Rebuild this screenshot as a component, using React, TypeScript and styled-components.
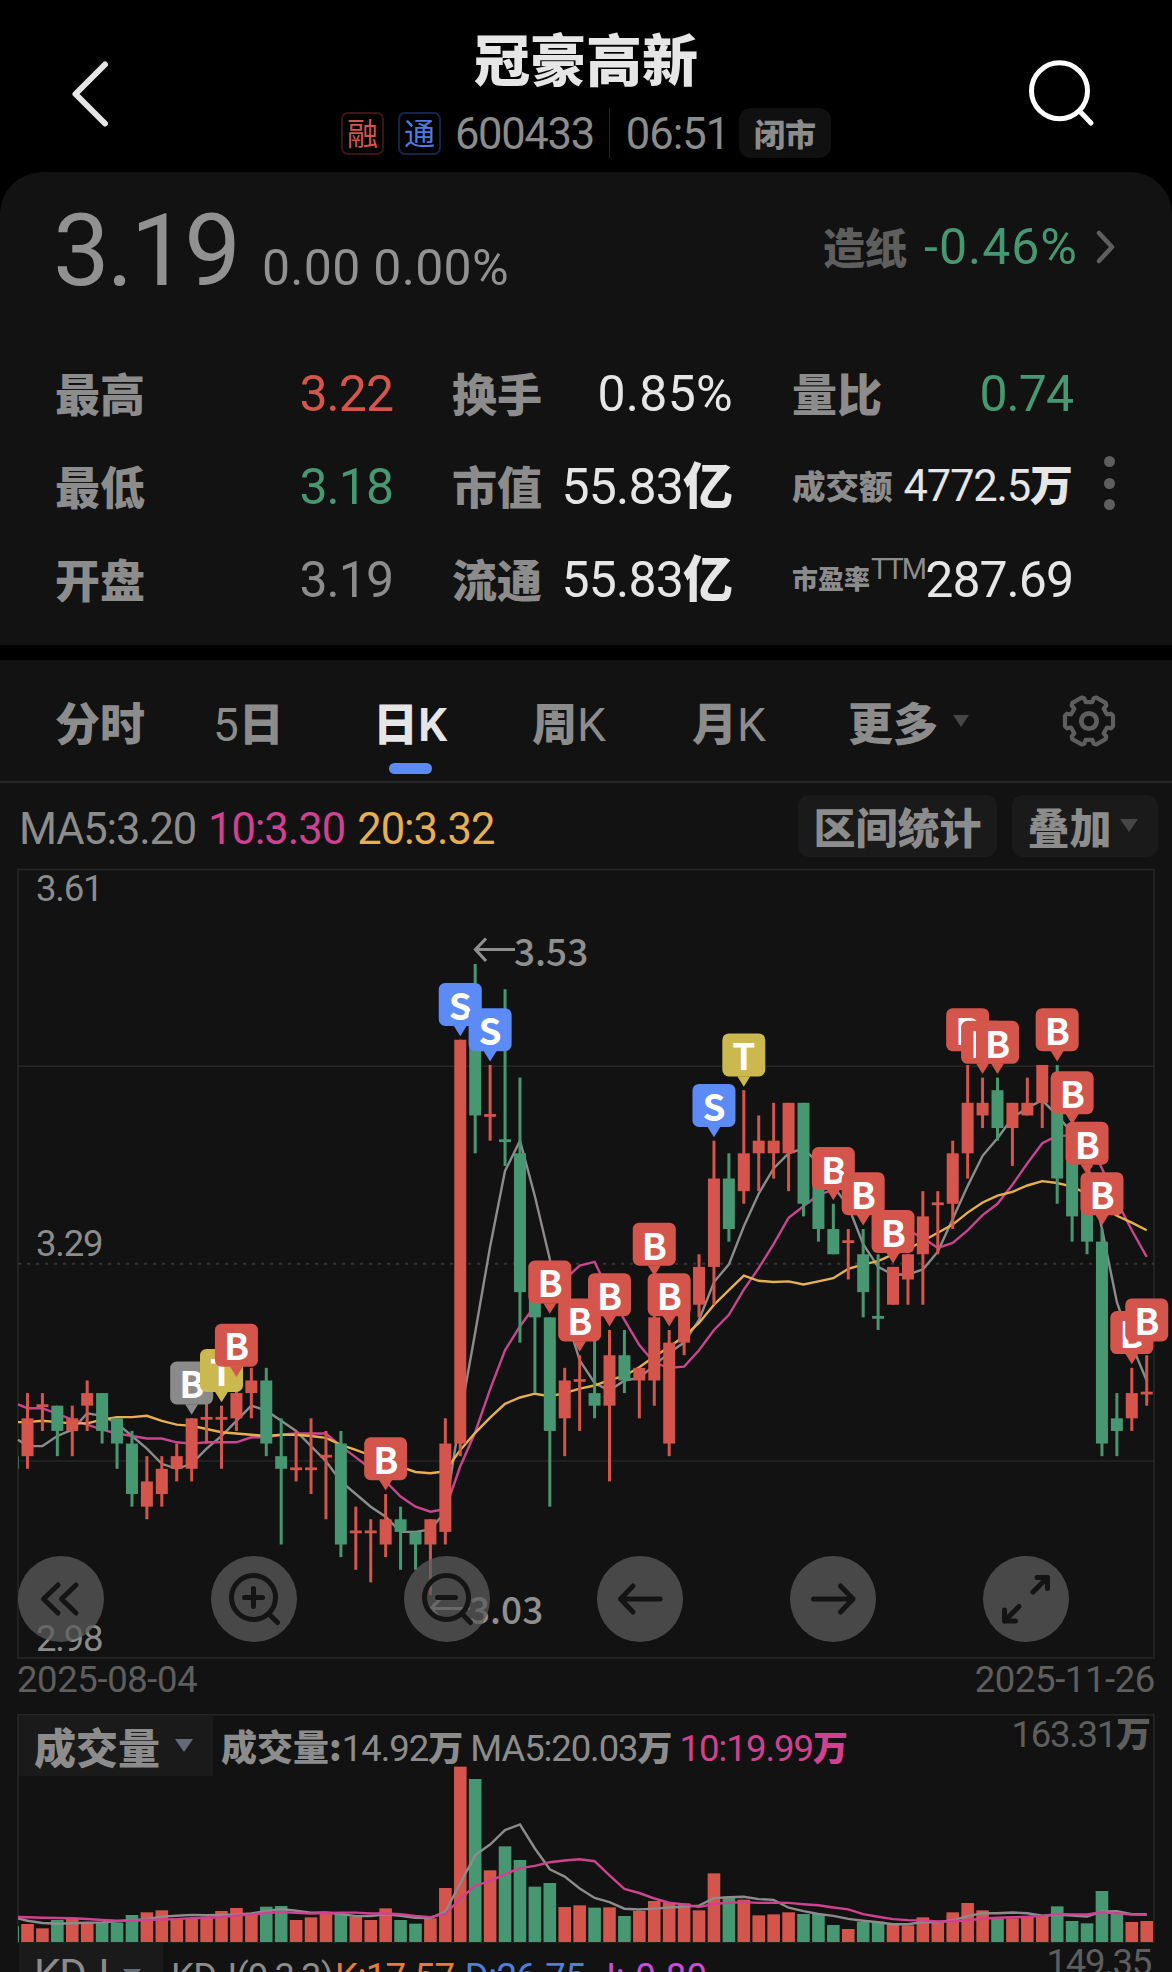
import React from 'react';
import styled, { createGlobalStyle } from 'styled-components';

const RED = '#d4554b';
const GREEN = '#479772';
const BLUE = '#5c8bf6';
const GREY = '#8c8c8c';
const DIM = '#5e5e5e';
const WHITE = '#e6e6e6';
const PINK = '#d0428f';
const AMBER = '#e6b052';
const PANEL = '#121212';
const LINE = '#262626';
const CJK = "'Noto Sans CJK SC', sans-serif";

const Global = createGlobalStyle`
  body { margin: 0; background: #000; }
  * { box-sizing: border-box; }
`;

const Screen = styled.div`
  width: 1172px;
  height: 1972px;
  overflow: hidden;
  display: flex;
  flex-direction: column;
  background: #000;
  font-family: Roboto, ${CJK};
  color: ${GREY};
  white-space: nowrap;
`;

const Num = styled.span<{ $size: number; $color?: string; $gap?: number }>`
  font-size: ${p => p.$size}px;
  line-height: 1;
  color: ${p => p.$color ?? GREY};
  letter-spacing: ${p => p.$gap ?? 0}px;
`;

const BigNum = styled(Num)`
  font-stretch: 88%;
  margin-left: -2px;
`;

const Cn = styled.span<{ $size: number; $color?: string; $weight?: number }>`
  font-family: ${CJK};
  font-size: ${p => p.$size}px;
  font-weight: ${p => p.$weight ?? 900};
  line-height: 1;
  letter-spacing: 0;
  color: ${p => p.$color ?? 'inherit'};
`;

const Unit = styled(Cn)`
  line-height: 0;
`;

/* header */
const Header = styled.header`
  height: 172px;
  flex: none;
  display: grid;
  grid-template-columns: 180px 1fr 180px;
`;

const HeaderSide = styled.div<{ $end?: boolean }>`
  display: flex;
  justify-content: ${p => (p.$end ? 'flex-end' : 'flex-start')};
  padding: ${p => (p.$end ? '56px 74px 0 0' : '56px 0 0 66px')};
`;

const HeaderCenter = styled.div`
  display: flex;
  flex-direction: column;
  align-items: center;
  padding-top: 29px;
`;

const TitleMeta = styled.div`
  display: flex;
  align-items: center;
  height: 52px;
  margin-top: 22px;
`;

const MetaNum = styled(Num)`
  padding-top: 4px;
`;

const Tag = styled.span<{ $color: string; $border: string }>`
  width: 43px;
  height: 43px;
  border: 2px solid ${p => p.$border};
  border-radius: 7px;
  display: flex;
  align-items: center;
  justify-content: center;
  margin-right: 14px;
  padding-bottom: 3px;
  font: 400 31px/1 ${CJK};
  color: ${p => p.$color};
`;

const Divider = styled.i`
  width: 1px;
  height: 50px;
  background: #262626;
  margin: 0 16px 0 15px;
`;

const Pill = styled.span`
  height: 50px;
  width: 92px;
  margin-left: 10px;
  border-radius: 12px;
  background: #101010;
  display: flex;
  align-items: center;
  justify-content: center;
  padding-bottom: 2px;
`;

/* quote panel */
const Quote = styled.section`
  height: 473px;
  flex: none;
  background: ${PANEL};
  border-radius: 42px 42px 0 0;
  padding: 0 55px;
  margin-bottom: 15px;
`;

const PriceRow = styled.div`
  height: 175px;
  display: flex;
  justify-content: space-between;
`;

const Price = styled.div`
  display: flex;
  align-items: baseline;
  padding-top: 28px;
  gap: 24px;
`;

const Sector = styled.div`
  display: flex;
  align-items: center;
  height: 60px;
  padding-top: 6px;
  margin: 42px 0 0;
  gap: 17px;
`;

const StatsWrap = styled.div`
  display: flex;
`;

const Stats = styled.div`
  display: grid;
  grid-template-columns: 338px 281px 281px;
  column-gap: 59px;
  grid-auto-rows: 93px;
`;

const Stat = styled.div`
  display: flex;
  align-items: center;
  justify-content: space-between;
`;

const StatLabel = styled(Cn)`
  padding-bottom: 3px;
`;

const Ttm = styled.span`
  font-size: 29px;
  line-height: 1;
  letter-spacing: -2px;
  margin: -20px auto 0 1px;
`;

const MoreDots = styled.div`
  width: 11px;
  margin: 109px 0 0 31px;
  display: flex;
  flex-direction: column;
  gap: 10.5px;
  i {
    width: 11px;
    height: 11px;
    border-radius: 50%;
    background: ${DIM};
  }
`;

/* tabs */
const Tabs = styled.nav`
  height: 123px;
  flex: none;
  display: flex;
  background: ${PANEL};
  border-bottom: 2px solid #282828;
  padding: 32px 54px 0 55px;
`;

const Tab = styled.div<{ $width: number; $active?: boolean }>`
  width: ${p => p.$width}px;
  height: 89px;
  display: flex;
  color: ${p => (p.$active ? WHITE : GREY)};
`;

const TabText = styled.span<{ $active?: boolean }>`
  position: relative;
  display: flex;
  align-items: baseline;
  height: 60px;
  line-height: 60px;
  font-size: 46px;
  font-weight: ${p => (p.$active ? 600 : 400)};
  &::after {
    content: '';
    display: ${p => (p.$active ? 'block' : 'none')};
    position: absolute;
    left: 16px;
    top: 71px;
    width: 43px;
    height: 11px;
    border-radius: 6px;
    background: ${BLUE};
  }
`;

const TabCn = styled(Cn)`
  line-height: 60px;
`;

const Caret = styled.i<{ $w: number; $color?: string }>`
  width: 0;
  height: 0;
  border-left: ${p => p.$w / 2}px solid transparent;
  border-right: ${p => p.$w / 2}px solid transparent;
  border-top: ${p => p.$w * 0.74}px solid ${p => p.$color ?? '#464646'};
`;

const TabCaret = styled(Caret)`
  margin: 23px 0 0 15px;
`;

const Gear = styled.svg`
  display: block;
  margin-top: 0.5px;
`;

/* chart header */
const MaRow = styled.div`
  height: 85px;
  flex: none;
  display: flex;
  align-items: center;
  background: ${PANEL};
  padding: 0 14px 0 19px;
`;

const MaValues = styled.div`
  flex: 1;
  display: flex;
  gap: 12px;
  padding-top: 8px;
`;

const Chip = styled.button<{ $width: number }>`
  width: ${p => p.$width}px;
  height: 62px;
  margin-left: 15px;
  border: 0;
  border-radius: 11px;
  background: #1a1a1a;
  color: ${GREY};
  display: flex;
  align-items: center;
  justify-content: center;
  gap: 8px;
  padding: 0;
`;

const DropChip = styled(Chip)`
  padding-right: 5px;
`;

const ChartPane = styled.div<{ $height: number }>`
  position: relative;
  flex: none;
  height: ${p => p.$height}px;
  background: ${PANEL};
  svg {
    display: block;
  }
`;

const Controls = styled.div`
  position: absolute;
  left: 18px;
  bottom: 18px;
  display: flex;
  gap: 107px;
`;

const RoundButton = styled.button`
  width: 86px;
  height: 86px;
  padding: 0;
  border: 0;
  border-radius: 50%;
  background: rgba(91, 91, 91, 0.75);
`;

const DateRow = styled.div`
  height: 54px;
  flex: none;
  display: flex;
  justify-content: space-between;
  padding: 2px 17px 0;
  background: ${PANEL};
`;

const IndicatorHead = styled.div<{ $top: number }>`
  position: absolute;
  left: 19px;
  right: 19px;
  top: ${p => p.$top}px;
  display: flex;
`;

const IndicatorName = styled.div<{ $width: number; $height: number }>`
  width: ${p => p.$width}px;
  height: ${p => p.$height}px;
  background: #1a1a1a;
  display: flex;
  align-items: center;
  gap: 15px;
  padding: 0 0 0 15px;
`;

const IndicatorValues = styled.div<{ $top: number; $gap: number }>`
  display: flex;
  flex: 1;
  gap: ${p => p.$gap}px;
  padding: ${p => p.$top}px 0 0 8px;
`;

const IndicatorMax = styled.div<{ $top: number }>`
  padding: ${p => p.$top}px 2px 0 0;
`;

const KdjPane = styled.div`
  position: relative;
  flex: 1;
  background: ${PANEL};
  overflow: hidden;
`;

const SvgNum = styled.text`
  font-family: Roboto, sans-serif;
  font-size: 36.5px;
  letter-spacing: -1.2px;
  fill: ${GREY};
`;

const PeakText = styled.text`
  font-family: ${CJK};
  font-size: 37px;
  font-weight: 500;
  fill: #8f8f8f;
`;

const MarkerText = styled.text`
  font-family: ${CJK};
  font-size: 37px;
  font-weight: 700;
  text-anchor: middle;
  fill: #fff;
`;

/* direction, high, low, open/close extremes (in cents) */
type Candle = [dir: 'r' | 'g', high: number, low: number, top: number, bottom: number];
const candles: Candle[] = [
  ['r', 319, 313, 317, 314], ['r', 319, 316, 318, 318], ['g', 318, 314, 318, 316], ['r', 318, 314, 317, 316],
  ['r', 320, 316, 319, 318], ['g', 319, 315, 319, 316], ['g', 317, 313, 317, 315], ['g', 316, 310, 315, 311],
  ['r', 314, 309, 312, 310], ['r', 314, 310, 313, 311], ['r', 315, 312, 314, 313], ['r', 317, 312, 317, 313],
  ['r', 319, 315, 317, 317], ['r', 318, 313, 317, 317], ['r', 320, 316, 319, 317], ['r', 321, 317, 320, 319],
  ['g', 321, 314, 320, 315], ['g', 317, 307, 314, 313], ['r', 316, 312, 313, 313], ['r', 317, 311, 313, 313],
  ['r', 316, 309, 314, 314], ['g', 316, 306, 315, 307], ['r', 310, 305, 308, 308], ['r', 309, 304, 308, 308],
  ['r', 311, 306, 309, 307], ['g', 310, 305, 309, 308], ['g', 308, 305, 308, 307], ['r', 309, 303, 309, 307],
  ['r', 317, 307, 315, 308], ['r', 347, 314, 347, 315], ['g', 353, 338, 347, 341], ['r', 345, 339, 341, 341],
  ['g', 351, 337, 339, 339], ['g', 344, 323, 338, 327], ['g', 327, 319, 327, 325], ['g', 325, 310, 325, 316],
  ['r', 321, 314, 320, 317], ['r', 322, 316, 320, 320], ['g', 325, 317, 319, 318], ['r', 324, 312, 322, 318],
  ['g', 324, 319, 322, 320], ['r', 321, 317, 321, 320], ['r', 328, 318, 325, 320], ['r', 324, 314, 323, 315],
  ['r', 326, 322, 326, 323], ['r', 330, 325, 329, 326], ['r', 339, 326, 336, 329], ['g', 338, 331, 336, 332],
  ['r', 343, 334, 338, 335], ['r', 341, 335, 339, 338], ['r', 342, 336, 339, 338], ['r', 342, 335, 342, 338],
  ['g', 342, 333, 342, 334], ['g', 337, 331, 336, 332], ['g', 334, 330, 332, 330], ['r', 332, 328, 331, 331],
  ['g', 332, 325, 330, 327], ['g', 330, 324, 325, 325], ['r', 329, 326, 329, 326], ['r', 330, 326, 330, 328],
  ['r', 335, 326, 333, 330], ['r', 335, 330, 334, 334], ['r', 339, 332, 338, 334], ['r', 345, 336, 342, 338],
  ['r', 344, 340, 342, 341], ['g', 344, 339, 343, 340], ['r', 342, 337, 342, 340], ['r', 344, 341, 342, 341],
  ['r', 345, 340, 345, 342], ['g', 345, 334, 343, 336], ['g', 340, 331, 339, 333], ['g', 336, 330, 335, 331],
  ['g', 332, 314, 331, 315], ['g', 319, 314, 317, 316], ['r', 321, 316, 319, 317], ['r', 322, 318, 319, 319],
];

const markers: [index: number, letter: string, color: string][] = [
  [11, 'B', '#8a8a8a'], [13, 'T', '#cbb84e'], [14, 'B', RED], [24, 'B', RED], [29, 'S', BLUE], [31, 'S', BLUE],
  [35, 'B', RED], [37, 'B', RED], [39, 'B', RED], [42, 'B', RED], [43, 'B', RED], [46, 'S', BLUE],
  [48, 'T', '#cbb84e'], [54, 'B', RED], [56, 'B', RED], [58, 'B', RED], [63, 'B', RED], [64, 'B', RED],
  [65, 'B', RED], [69, 'B', RED], [70, 'B', RED], [71, 'B', RED], [72, 'B', RED], [74, 'B', RED], [75, 'B', RED],
];

/* bar heights, three units to a pixel */
const volumes = [
  54, 41, 66, 71, 58, 58, 58, 81, 89, 95, 71, 71, 76, 93, 102, 86, 106, 108, 66, 74, 88, 84, 76, 66, 101, 66, 55,
  71, 162, 526, 489, 215, 287, 246, 166, 177, 105, 110, 103, 104, 78, 93, 123, 119, 116, 95, 206, 136, 127, 80, 83,
  89, 84, 84, 51, 39, 61, 61, 54, 50, 74, 58, 89, 117, 95, 71, 71, 78, 79, 107, 63, 56, 153, 85, 60, 63,
];

const xAt = (i: number) => 27.5 + i * 14.923;
const yAt = (p: number) => 964 + (353 - p) * 12.62;
const VOL_BASE = 1942;

const average = (values: number[], n: number, head: number[]) =>
  values.map((_, i) =>
    i < head.length ? head[i] : values.slice(Math.max(0, i - n + 1), i + 1).reduce((a, b) => a + b, 0) / Math.min(n, i + 1),
  );

const toPath = (first: number, values: number[], y: (v: number) => number) =>
  `M18 ${y(first).toFixed(1)} ` + values.map((v, i) => `L${xAt(i).toFixed(1)} ${y(v).toFixed(1)}`).join(' ');

const closes = candles.map(([dir, , , top, bottom]) => (dir === 'r' ? top : bottom));
const ma5 = average(closes, 5, [314.8, 314.8, 315.6, 316.1]);
const ma10 = average(closes, 10, [317.8, 317.8, 317.35, 316.9, 316.5, 316.1, 315.8, 315.6, 315.4]);
const ma20 = average(closes, 20, [
  316.7, 316.8, 316.7, 316.6, 316.6, 316.9, 317.1, 317.1, 317.2, 316.8, 316.5, 316.4, 316.15, 315.9, 315.8, 315.7,
  315.6, 315.7, 315.7,
]);
const vol5 = average(volumes, 5, [64, 57, 55, 56]);
const vol10 = average(volumes, 10, [74, 73, 72, 71, 69, 66, 64, 64, 66]);
const volY = (v: number) => VOL_BASE - v / 3;

const CandleShape = ({ index }: { index: number }) => {
  const [dir, high, low, top, bottom] = candles[index];
  const x = xAt(index);
  const color = dir === 'r' ? RED : GREEN;
  const flat = top === bottom;
  return (
    <g fill={color}>
      <rect x={x - 1.5} y={yAt(high)} width={3} height={yAt(low) - yAt(high)} />
      <rect x={x - 6} y={flat ? yAt(top) - 1.4 : yAt(top)} width={12} height={flat ? 2.8 : yAt(bottom) - yAt(top)} />
    </g>
  );
};

const Marker = ({ index, letter, color }: { index: number; letter: string; color: string }) => {
  const x = xAt(index);
  const y = yAt(candles[index][1]);
  return (
    <g>
      <rect x={x - 21.5} y={y - 56.8} width={43} height={43} rx={6.5} fill={color} />
      <path d={`M${x - 6.5} ${y - 14}h13l-6.5 10.5z`} fill={color} />
      <MarkerText x={letter === 'B' ? x + 0.2 : x} y={y - 20}>{letter}</MarkerText>
    </g>
  );
};

const PriceChart = () => (
  <svg width="1172" height="792" viewBox="0 868 1172 792">
    <clipPath id="plot"><rect x="18" y="868" width="1154" height="792" /></clipPath>
    <g stroke={LINE} strokeWidth="1.6" fill="none">
      <rect x="18" y="869.5" width="1136" height="788.5" />
      <path d="M18 1066.3H1154M18 1461H1154" />
      <path d="M18 1263.7H1154" strokeDasharray="3.2 5.8" stroke="#343434" strokeWidth="2" />
    </g>
    <SvgNum x="36" y="901">3.61</SvgNum>
    <SvgNum x="36" y="1256">3.29</SvgNum>
    <SvgNum x="36" y="1651">2.98</SvgNum>
    <g fill="none" strokeWidth="2.4">
      <path d={toPath(315.3, ma5, yAt)} stroke="#8c8c8c" />
      <path d={toPath(318.1, ma10, yAt)} stroke="#c7468f" />
      <path d={toPath(316.7, ma20, yAt)} stroke={AMBER} />
    </g>
    <g clipPath="url(#plot)">
      <rect x="6.6" y={yAt(314)} width="12" height="12.6" fill={GREEN} />
      {candles.map((_, i) => <CandleShape key={i} index={i} />)}
    </g>
    <g stroke="#8f8f8f" strokeWidth="3.2" fill="none">
      <path d="M515 949.5H476M486 938.5L475.5 949.5L486 961" />
      <path d="M470 1608.5H432M441.5 1597.5L431 1608.5L441.5 1620" />
    </g>
    <PeakText x="514" y="965.5">3.53</PeakText>
    <PeakText x="469" y="1624">3.03</PeakText>
    {markers.map(([i, letter, color]) => <Marker key={i} index={i} letter={letter} color={color} />)}
  </svg>
);

const VolumeChart = () => (
  <svg width="1172" height="229" viewBox="0 1714 1172 229">
    <path d="M18 1943V1714.7H1154V1943" stroke={LINE} strokeWidth="1.6" fill="none" />
    <path d="M18 1942.5H1154" stroke="#222" strokeWidth="1" />
    <rect x="18" y="1926" width="1" height="16" fill={GREEN} />
    {volumes.map((v, i) => (
      <rect key={i} x={xAt(i) - 6.3} y={volY(v)} width={12.6} height={v / 3} fill={candles[i][0] === 'r' ? RED : GREEN} />
    ))}
    <g fill="none" strokeWidth="2.4">
      <path d={toPath(71, vol5, volY)} stroke="#8c8c8c" />
      <path d={toPath(75, vol10, volY)} stroke="#d0428f" />
    </g>
  </svg>
);

const gearPath = (() => {
  const points: string[] = [];
  for (let k = 0; k < 6; k++) {
    const a = (k * Math.PI) / 3;
    const local = [[18, -6.5], [22, -7.3], [24, -5.3], [24, 5.3], [22, 7.3], [18, 6.5]];
    local.forEach(([x, y]) => {
      points.push(`${(28 + x * Math.cos(a) - y * Math.sin(a)).toFixed(2)} ${(28 + x * Math.sin(a) + y * Math.cos(a)).toFixed(2)}`);
    });
  }
  return `M${points.join('L')}Z`;
})();

const Icon = ({ children }: { children: React.ReactNode }) => (
  <svg width="86" height="86" viewBox="0 0 86 86" fill="none" stroke="#141414" strokeWidth="5" strokeLinecap="round" strokeLinejoin="round">
    {children}
  </svg>
);

const controlIcons = [
  <path d="M40 29L25.5 43L40 57M58 29L43.5 43L58 57" />,
  <><circle cx="42.5" cy="41.5" r="22" /><path d="M58.5 58.5L66.5 66.5M33.5 41.5H51.5M42.5 32.5V50.5" /></>,
  <><circle cx="42.5" cy="41.5" r="22" /><path d="M58.5 58.5L66.5 66.5M33.5 41.5H51.5" /></>,
  <path d="M63 43H23.5M36 30L23.5 43L36 56" />,
  <path d="M23.5 43H63M50.5 30L63 43L50.5 56" />,
  <path d="M50 36L64.5 21.5M54 21.5H64.5V32.5M36 50.5L21.5 65M21.5 54V65H32.5" />,
];

const App = () => (
  <Screen>
    <Global />
    <Header>
      <HeaderSide>
        <svg width="48" height="76" viewBox="66 56 48 76" fill="none" stroke={WHITE} strokeWidth="6" strokeLinecap="round" strokeLinejoin="round">
          <path d="M105 64.5L75.5 94L105 123.5" />
        </svg>
      </HeaderSide>
      <HeaderCenter>
        <Cn $size={56} $color={WHITE}>冠豪高新</Cn>
        <TitleMeta>
          <Tag $color="#d4554b" $border="#3a1512">融</Tag>
          <Tag $color="#4f7ae0" $border="#14254a">通</Tag>
          <MetaNum $size={43.5} $gap={-1.3}>600433</MetaNum>
          <Divider />
          <MetaNum $size={43.5} $gap={-1}>06:51</MetaNum>
          <Pill><Cn $size={31}>闭市</Cn></Pill>
        </TitleMeta>
      </HeaderCenter>
      <HeaderSide $end>
        <svg width="72" height="76" viewBox="1026 56 72 76" fill="none" stroke="#fff" strokeWidth="5" strokeLinecap="round">
          <circle cx="1059.5" cy="90.7" r="28" />
          <path d="M1080 111.5L1091 123" />
        </svg>
      </HeaderSide>
    </Header>

    <Quote>
      <PriceRow>
        <Price>
          <BigNum $size={101} $gap={-3} $color="#919191">3.19</BigNum>
          <Num $size={50} $gap={0.3} $color="#919191">0.00 0.00%</Num>
        </Price>
        <Sector>
          <StatLabel $size={42} $color={DIM}>造纸</StatLabel>
          <Num $size={50} $gap={1} $color={GREEN}>-0.46%</Num>
          <svg width="22" height="36" viewBox="0 0 22 36" fill="none" stroke={DIM} strokeWidth="4.5" strokeLinecap="round" strokeLinejoin="round">
            <path d="M4 4L17 18L4 32" />
          </svg>
        </Sector>
      </PriceRow>
      <StatsWrap>
        <Stats>
          <Stat><StatLabel $size={45}>最高</StatLabel><Num $size={50} $gap={-1} $color={RED}>3.22</Num></Stat>
          <Stat><StatLabel $size={45}>换手</StatLabel><Num $size={50} $gap={0.3} $color={WHITE}>0.85%</Num></Stat>
          <Stat><StatLabel $size={45}>量比</StatLabel><Num $size={50} $gap={-1} $color={GREEN}>0.74</Num></Stat>
          <Stat><StatLabel $size={45}>最低</StatLabel><Num $size={50} $gap={-1} $color={GREEN}>3.18</Num></Stat>
          <Stat><StatLabel $size={45}>市值</StatLabel><Num $size={50} $gap={-0.8} $color={WHITE}>55.83<Unit $size={50}>亿</Unit></Num></Stat>
          <Stat><StatLabel $size={33.5}>成交额</StatLabel><Num $size={43.5} $gap={-1.2} $color={WHITE}>4772.5<Unit $size={43}>万</Unit></Num></Stat>
          <Stat><StatLabel $size={45}>开盘</StatLabel><Num $size={50} $gap={-1}>3.19</Num></Stat>
          <Stat><StatLabel $size={45}>流通</StatLabel><Num $size={50} $gap={-0.8} $color={WHITE}>55.83<Unit $size={50}>亿</Unit></Num></Stat>
          <Stat>
            <StatLabel $size={26}>市盈率</StatLabel><Ttm>TTM</Ttm>
            <Num $size={50} $gap={-1} $color={WHITE}>287.69</Num>
          </Stat>
        </Stats>
        <MoreDots><i /><i /><i /></MoreDots>
      </StatsWrap>
    </Quote>

    <Tabs>
      <Tab $width={158}><TabText><TabCn $size={45}>分时</TabCn></TabText></Tab>
      <Tab $width={160}><TabText>5<TabCn $size={45}>日</TabCn></TabText></Tab>
      <Tab $width={159} $active><TabText $active><TabCn $size={45}>日</TabCn>K</TabText></Tab>
      <Tab $width={160}><TabText><TabCn $size={45}>周</TabCn>K</TabText></Tab>
      <Tab $width={156}><TabText><TabCn $size={45}>月</TabCn>K</TabText></Tab>
      <Tab $width={213}>
        <TabText><TabCn $size={45}>更多</TabCn></TabText>
        <TabCaret $w={17} />
      </Tab>
      <Gear width="56" height="56" viewBox="0 0 56 56" fill="none" stroke={DIM} strokeWidth="4.2" strokeLinejoin="round">
        <path d={gearPath} />
        <circle cx="28" cy="28" r="7.7" strokeWidth="4.8" />
      </Gear>
    </Tabs>

    <MaRow>
      <MaValues>
        <Num $size={43.5} $gap={-1.2}>MA5:3.20</Num>
        <Num $size={43.5} $gap={-1} $color={PINK}>10:3.30</Num>
        <Num $size={43.5} $gap={-1} $color={AMBER}>20:3.32</Num>
      </MaValues>
      <Chip $width={199}><Cn $size={42}>区间统计</Cn></Chip>
      <DropChip $width={146}><Cn $size={42}>叠加</Cn><Caret $w={18} /></DropChip>
    </MaRow>

    <ChartPane $height={792}>
      <PriceChart />
      <Controls>
        {controlIcons.map((icon, i) => <RoundButton key={i}><Icon>{icon}</Icon></RoundButton>)}
      </Controls>
    </ChartPane>

    <DateRow>
      <Num $size={36.5} $gap={-0.4} $color={DIM}>2025-08-04</Num>
      <Num $size={36.5} $gap={-0.4} $color={DIM}>2025-11-26</Num>
    </DateRow>

    <ChartPane $height={229}>
      <VolumeChart />
      <IndicatorHead $top={1.5}>
        <IndicatorName $width={194} $height={60}>
          <Cn $size={42}>成交量</Cn><Caret $w={18} $color="#646a75" />
        </IndicatorName>
        <IndicatorValues $top={15} $gap={7}>
          <Num $size={36.5} $gap={-1}><Unit $size={36}>成交量:</Unit>14.92<Unit $size={35}>万</Unit></Num>
          <Num $size={36.5} $gap={-1.1}>MA5:20.03<Unit $size={35}>万</Unit></Num>
          <Num $size={36.5} $gap={-1} $color={PINK}>10:19.99<Unit $size={35}>万</Unit></Num>
        </IndicatorValues>
        <IndicatorMax $top={1}>
          <Num $size={36.5} $gap={-1.3} $color={DIM}>163.31<Unit $size={35}>万</Unit></Num>
        </IndicatorMax>
      </IndicatorHead>
    </ChartPane>

    <KdjPane>
      <IndicatorHead $top={0}>
        <IndicatorName $width={144} $height={64}>
          <Num $size={42} $gap={-1}>KDJ</Num><Caret $w={18} $color="#646a75" />
        </IndicatorName>
        <IndicatorValues $top={16} $gap={2}>
          <Num $size={36.5} $gap={-0.6}>KDJ(9,3,3)</Num>
          <Num $size={36.5} $gap={-0.6} $color="#e07d3c">K:17.57&nbsp;</Num>
          <Num $size={36.5} $gap={-0.6} $color="#4f7fd6">D:26.75&nbsp;</Num>
          <Num $size={36.5} $gap={0.2} $color="#c64fd8">J:-0.80</Num>
        </IndicatorValues>
        <IndicatorMax $top={2}>
          <Num $size={36.5} $gap={-1.3} $color={DIM}>149.35</Num>
        </IndicatorMax>
      </IndicatorHead>
    </KdjPane>
  </Screen>
);

export default App;
